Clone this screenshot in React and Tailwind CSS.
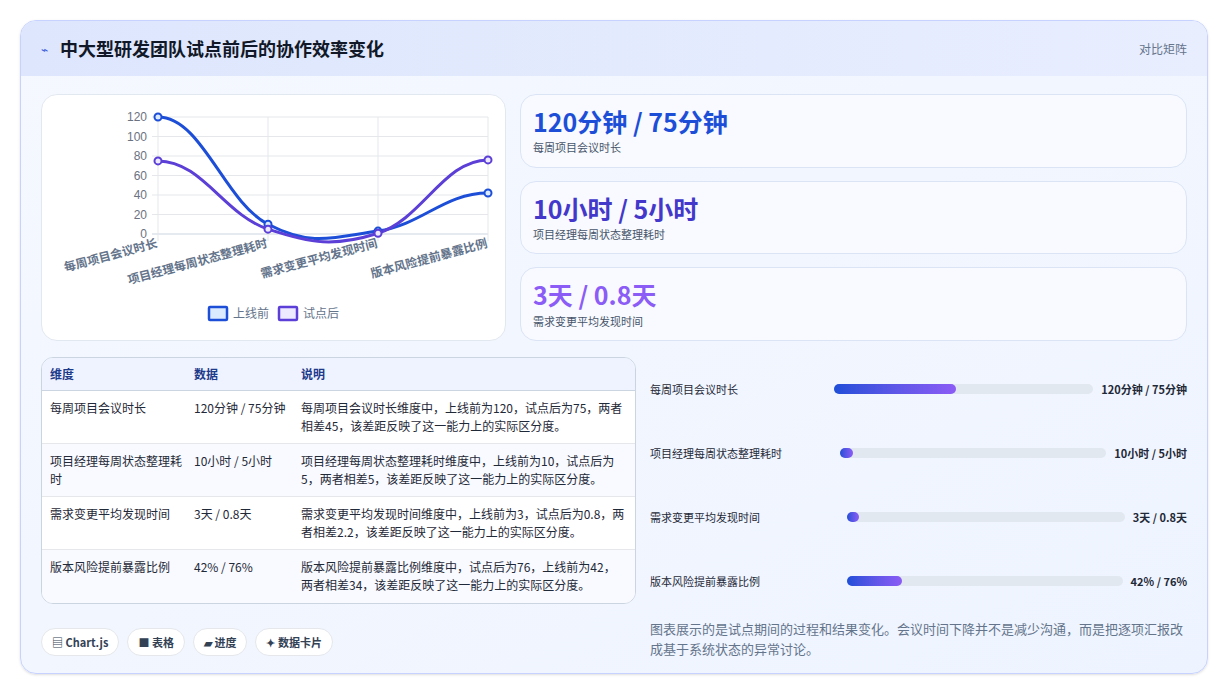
const F = { fontFamily: '"Noto Sans CJK SC", "Noto Sans", sans-serif' };

const before = [120, 10, 3, 42];
const after = [75, 5, 0.8, 76];
const xs = [116, 226, 336, 446];
const yv = (v) => 139 - (v * 117) / 120;
const labels = ["每周项目会议时长", "项目经理每周状态整理耗时", "需求变更平均发现时间", "版本风险提前暴露比例"];

function curve(vals) {
  const p = vals.map((v, i) => [xs[i], yv(v)]);
  let d = `M${p[0][0]},${p[0][1]}`;
  for (let i = 0; i < p.length - 1; i++) {
    const [x0, y0] = p[i];
    const [x1, y1] = p[i + 1];
    const dx = (x1 - x0) * 0.4;
    const s0 = i === 0 ? 0 : (p[i + 1][1] - p[i - 1][1]) / 2 / (x1 - x0) * dx;
    const s1 = i + 2 < p.length ? (p[i + 2][1] - y0) / 2 / (x1 - x0) * dx : 0;
    d += ` C${x0 + dx},${y0 + s0} ${x1 - dx},${y1 - s1} ${x1},${y1}`;
  }
  return d;
}

function Chart() {
  return (
    <svg width="465" height="247" style={{ fontFamily: '"Liberation Sans", "Noto Sans CJK SC", sans-serif' }}>
      {[0, 20, 40, 60, 80, 100, 120].map((v) => (
        <g key={v}>
          <line x1="110" x2="446" y1={yv(v)} y2={yv(v)} stroke={v === 0 ? "#cbd5e1" : "#e5e7eb"} />
          <text x="105" y={yv(v) + 4} textAnchor="end" fontSize="12" fill="#6b7280">{v}</text>
        </g>
      ))}
      {xs.map((x) => (
        <line key={x} x1={x} x2={x} y1="22" y2="146" stroke="#e5e7eb" />
      ))}
      <path d={curve(before)} fill="none" stroke="#1d4ed8" strokeWidth="3" />
      <path d={curve(after)} fill="none" stroke="#5b3fd6" strokeWidth="3" />
      {before.map((v, i) => <circle key={"b" + i} cx={xs[i]} cy={yv(v)} r="3.5" fill="#dbeafe" stroke="#1d4ed8" strokeWidth="2" />)}
      {after.map((v, i) => <circle key={"a" + i} cx={xs[i]} cy={yv(v)} r="3.5" fill="#ede9fe" stroke="#5b3fd6" strokeWidth="2" />)}
      {labels.map((l, i) => (
        <text key={l} x={xs[i]} y="152" textAnchor="end" fontSize="12" fontWeight="600" fill="#64748b" transform={`rotate(-15 ${xs[i]} 152)`}>{l}</text>
      ))}
      <rect x="167" y="212" width="18" height="13" rx="1" fill="#dbeafe" stroke="#1d4ed8" strokeWidth="2.5" />
      <text x="191" y="223" fontSize="12" fill="#64748b">上线前</text>
      <rect x="237" y="212" width="18" height="13" rx="1" fill="#ede9fe" stroke="#5b3fd6" strokeWidth="2.5" />
      <text x="261" y="223" fontSize="12" fill="#64748b">试点后</text>
    </svg>
  );
}

const stats = [
  ["120分钟 / 75分钟", "每周项目会议时长", "text-[#1d4ed8]"],
  ["10小时 / 5小时", "项目经理每周状态整理耗时", "text-[#4338ca]"],
  ["3天 / 0.8天", "需求变更平均发现时间", "text-[#8b5cf6]"],
];

const rows = [
  ["每周项目会议时长", "120分钟 / 75分钟", "每周项目会议时长维度中，上线前为120，试点后为75，两者相差45，该差距反映了这一能力上的实际区分度。"],
  ["项目经理每周状态整理耗时", "10小时 / 5小时", "项目经理每周状态整理耗时维度中，上线前为10，试点后为5，两者相差5，该差距反映了这一能力上的实际区分度。"],
  ["需求变更平均发现时间", "3天 / 0.8天", "需求变更平均发现时间维度中，上线前为3，试点后为0.8，两者相差2.2，该差距反映了这一能力上的实际区分度。"],
  ["版本风险提前暴露比例", "42% / 76%", "版本风险提前暴露比例维度中，试点后为76，上线前为42，两者相差34，该差距反映了这一能力上的实际区分度。"],
];

const bars = [
  ["每周项目会议时长", "120分钟 / 75分钟", 47, "w-[184px]"],
  ["项目经理每周状态整理耗时", "10小时 / 5小时", 5, "w-[190px]"],
  ["需求变更平均发现时间", "3天 / 0.8天", 3, "w-[197px]"],
  ["版本风险提前暴露比例", "42% / 76%", 20, "w-[197px]"],
];

export default function App() {
  return (
    <div className="w-[1228px] h-[695px] bg-white p-5" style={F}>
      <div className="h-[654px] rounded-2xl border border-[#c7d2fe] bg-gradient-to-br from-[#f5f8ff] to-[#eef4ff] overflow-hidden shadow-sm">
        <div className="h-[55px] bg-gradient-to-r from-[#dde6fd] to-[#e8eefe] flex items-center justify-between px-5">
          <div className="flex items-center gap-3">
            <span className="text-[#3b5bdb] text-xs">⌁</span>
            <h1 className="text-[18px] font-bold text-[#111827]">中大型研发团队试点前后的协作效率变化</h1>
          </div>
          <span className="text-xs text-[#64748b]">对比矩阵</span>
        </div>
        <div className="px-5 pt-[18px]">
          <div className="flex gap-[14px] h-[247px]">
            <div className="w-[465px] shrink-0 bg-white rounded-2xl border border-[#e2e8f0]">
              <Chart />
            </div>
            <div className="flex-1 flex flex-col gap-[13px]">
              {stats.map(([v, l, c]) => (
                <div key={l} className="flex-1 bg-[#f8faff] border border-[#dbe4f5] rounded-2xl px-3 flex flex-col justify-center">
                  <div className={`text-[25px] font-bold leading-tight ${c}`}>{v}</div>
                  <div className="text-[11px] text-[#475569] mt-0.5">{l}</div>
                </div>
              ))}
            </div>
          </div>
          <div className="flex gap-[14px] mt-4">
            <div className="w-[595px] shrink-0">
              <div className="rounded-xl border border-[#cbd5e1] overflow-hidden bg-white text-[12px]">
                <div className="flex h-[33px] items-center bg-[#eef3ff] border-b border-[#cbd5e1] font-semibold text-[#1e3a8a]">
                  <div className="w-[152px] pl-2">维度</div>
                  <div className="w-[107px]">数据</div>
                  <div>说明</div>
                </div>
                {rows.map(([a, b, c], i) => (
                  <div key={a} className={`flex h-[53px] items-start pt-2 leading-[18px] text-[#1f2937] ${i % 2 ? "bg-[#f8faff]" : "bg-white"} ${i < 3 ? "border-b border-[#e5e7eb]" : ""}`}>
                    <div className="w-[152px] pl-2 pr-3">{a}</div>
                    <div className="w-[107px] pr-2">{b}</div>
                    <div className="flex-1 pr-2">{c}</div>
                  </div>
                ))}
              </div>
              <div className="flex gap-2 mt-6 text-[11px] font-semibold text-[#334155]">
                {["▤ Chart.js", "■ 表格", "▰ 进度", "✦ 数据卡片"].map((t) => (
                  <span key={t} className="px-2.5 h-[28px] flex items-center rounded-full bg-white border border-[#e5e7eb]">{t}</span>
                ))}
              </div>
            </div>
            <div className="flex-1 pl-0">
              {bars.map(([l, v, p, w]) => (
                <div key={l} className="flex items-center h-[64px] text-[11px] text-[#1f2937]">
                  <div className={`${w} shrink-0`}>{l}</div>
                  <div className="flex-1 h-[10px] rounded-full bg-[#e2e8f0]">
                    <div className="h-full min-w-[12px] rounded-full bg-gradient-to-r from-[#1d4ed8] to-[#8b5cf6]" style={{ width: p + "%" }} />
                  </div>
                  <div className="ml-2 font-bold">{v}</div>
                </div>
              ))}
              <p className="mt-[6px] text-[13px] leading-[20px] text-[#64748b]">图表展示的是试点期间的过程和结果变化。会议时间下降并不是减少沟通，而是把逐项汇报改成基于系统状态的异常讨论。</p>
            </div>
          </div>
        </div>
      </div>
    </div>
  );
}
